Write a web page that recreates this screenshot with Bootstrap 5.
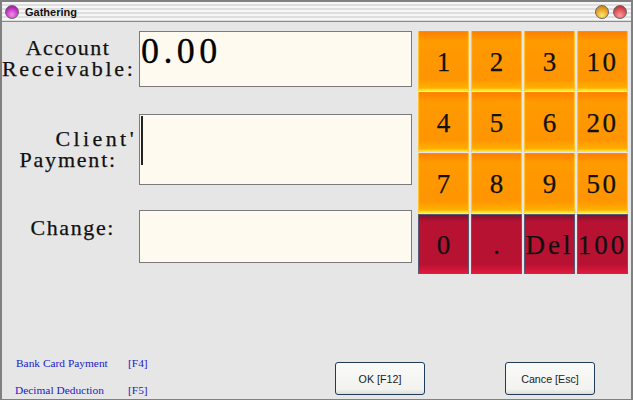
<!DOCTYPE html>
<html lang="en"><head><meta charset="utf-8"><title>Gathering</title>
<link href="https://cdn.jsdelivr.net/npm/bootstrap@5.3.0/dist/css/bootstrap.min.css" rel="stylesheet">
<style>
html,body{width:633px;height:400px;overflow:hidden;background:#e6e6e6}
.win{width:633px;height:400px;border:solid #808080;border-width:2px 2px 1px 2px;background:#e6e6e6}
.tbar{height:20px;border-bottom:1px solid #8a8a8a;padding:0 4px 0 3px;flex-shrink:0;
 background:repeating-linear-gradient(#f6f6f6 0 2px,#dedede 2px 4px)}
.ttl{font:700 11px "Liberation Sans",sans-serif;color:#111;margin-left:6px}
.orb{width:14px;height:14px;border-radius:50%;border:1px solid #666}
.orb-p{background:radial-gradient(circle at 50% 72%,#f58cf0,#b31fb3 72%)}
.orb-y{background:radial-gradient(circle at 50% 78%,#ffe66b,#d88a12 78%)}
.orb-r{background:radial-gradient(circle at 50% 78%,#ff9a9a,#c9343c 78%)}
.mainr{height:250px}
.frm{width:416px;padding-top:9px}
.lbl{width:137px;font:22px/21px "Liberation Serif",serif;color:#111;white-space:nowrap;-webkit-text-stroke:.25px #111}
.fld{width:273px;background:#fffaf0;border:1px solid #7a7a7a}
.r2{margin-top:27px}.r3{margin-top:25px}
.la{text-align:center;padding-top:6px;padding-right:5px}
.s1{letter-spacing:1.4px}.s2{letter-spacing:2.7px}.s3{letter-spacing:3.4px}.s4{letter-spacing:1.8px}.s5{letter-spacing:1.6px}
.lb{text-align:right;padding-top:14px}
.lb1{padding-right:2px}
.lb2{padding-right:22px}
.lc{text-align:right;padding-top:7px;padding-right:24px}
.f1{height:56px;font:36px/36px "Liberation Serif",serif;letter-spacing:4.4px;color:#000;padding:1px 0 0 1px;-webkit-text-stroke:.3px #000}
.f2{height:71px;padding:1px 0 0 1px}
.f3{height:53px}
.crt{width:2px;height:49px;background:#222}
.pad{display:grid;grid-template-columns:repeat(4,51px);grid-auto-rows:60px;gap:1px 2px;margin-top:9px}
.k{display:flex;align-items:center;justify-content:center;font:27px "Liberation Serif",serif;color:#111;white-space:nowrap;padding-top:2px;-webkit-text-stroke:.25px #111}
.ko{background:linear-gradient(#ff7d00,#ff9a00 16%,#ff9500 80%,#ffb000 95%,#ffe030 98%,#fff23a);box-shadow:inset 1px 0 1px #ffc83a,inset -1px 0 1px #ffc83a}
.kr{background:linear-gradient(#7e1230,#b81232 12%,#b81232 85%,#e01a3c);border:1px solid #5a5a78}
.kw{letter-spacing:2.4px}
.kx{letter-spacing:3px}
.ft{margin-top:auto;padding:0 0 4px 13px}
.lnks{width:320px;font:11.4px/14px "Liberation Serif",serif;color:#1a1ac8;margin-bottom:-2px}
.lrow+.lrow{margin-top:13px}
.lk1{width:112px}.lk2{width:113px;}
.bn{margin-left:1px}
.bbtn{width:90px;height:33px;border:1px solid #1f3b57;border-radius:3px;background:linear-gradient(#fafafa,#f2f2ee 85%,#dcdcd8);font:10.7px "Liberation Sans",sans-serif;color:#222;padding:0}
.gp{margin-left:80px}
</style></head><body>
<div class="win d-flex flex-column">
 <div class="tbar d-flex align-items-center">
  <span class="orb orb-p"></span><span class="ttl">Gathering</span>
  <span class="orb orb-y ms-auto me-1"></span><span class="orb orb-r"></span>
 </div>
 <div class="mainr d-flex">
  <div class="frm flex-shrink-0">
   <div class="d-flex"><div class="lbl la"><span class="s1">Account</span><br><span class="s2">Receivable:</span></div><div class="fld f1">0.00</div></div>
   <div class="d-flex r2"><div class="lbl lb"><div class="s3 lb1">Client'</div><div class="s4 lb2">Payment:</div></div><div class="fld f2"><div class="crt"></div></div></div>
   <div class="d-flex r3"><div class="lbl lc s5">Change:</div><div class="fld f3"></div></div>
  </div>
  <div class="pad">
   <div class="k ko">1</div><div class="k ko">2</div><div class="k ko">3</div><div class="k ko kw">10</div>
   <div class="k ko">4</div><div class="k ko">5</div><div class="k ko">6</div><div class="k ko kw">20</div>
   <div class="k ko">7</div><div class="k ko">8</div><div class="k ko">9</div><div class="k ko kw">50</div>
   <div class="k kr">0</div><div class="k kr">.</div><div class="k kr kx">Del</div><div class="k kr kx">100</div>
  </div>
 </div>
 <div class="ft d-flex align-items-end">
  <div class="lnks">
   <div class="d-flex lrow"><span class="lk1 bn">Bank Card Payment</span><span>[F4]</span></div>
   <div class="d-flex lrow"><span class="lk2">Decimal Deduction</span><span>[F5]</span></div>
  </div>
  <button class="bbtn" type="button">OK [F12]</button>
  <button class="bbtn gp" type="button">Cance [Esc]</button>
 </div>
</div>
</body></html>
